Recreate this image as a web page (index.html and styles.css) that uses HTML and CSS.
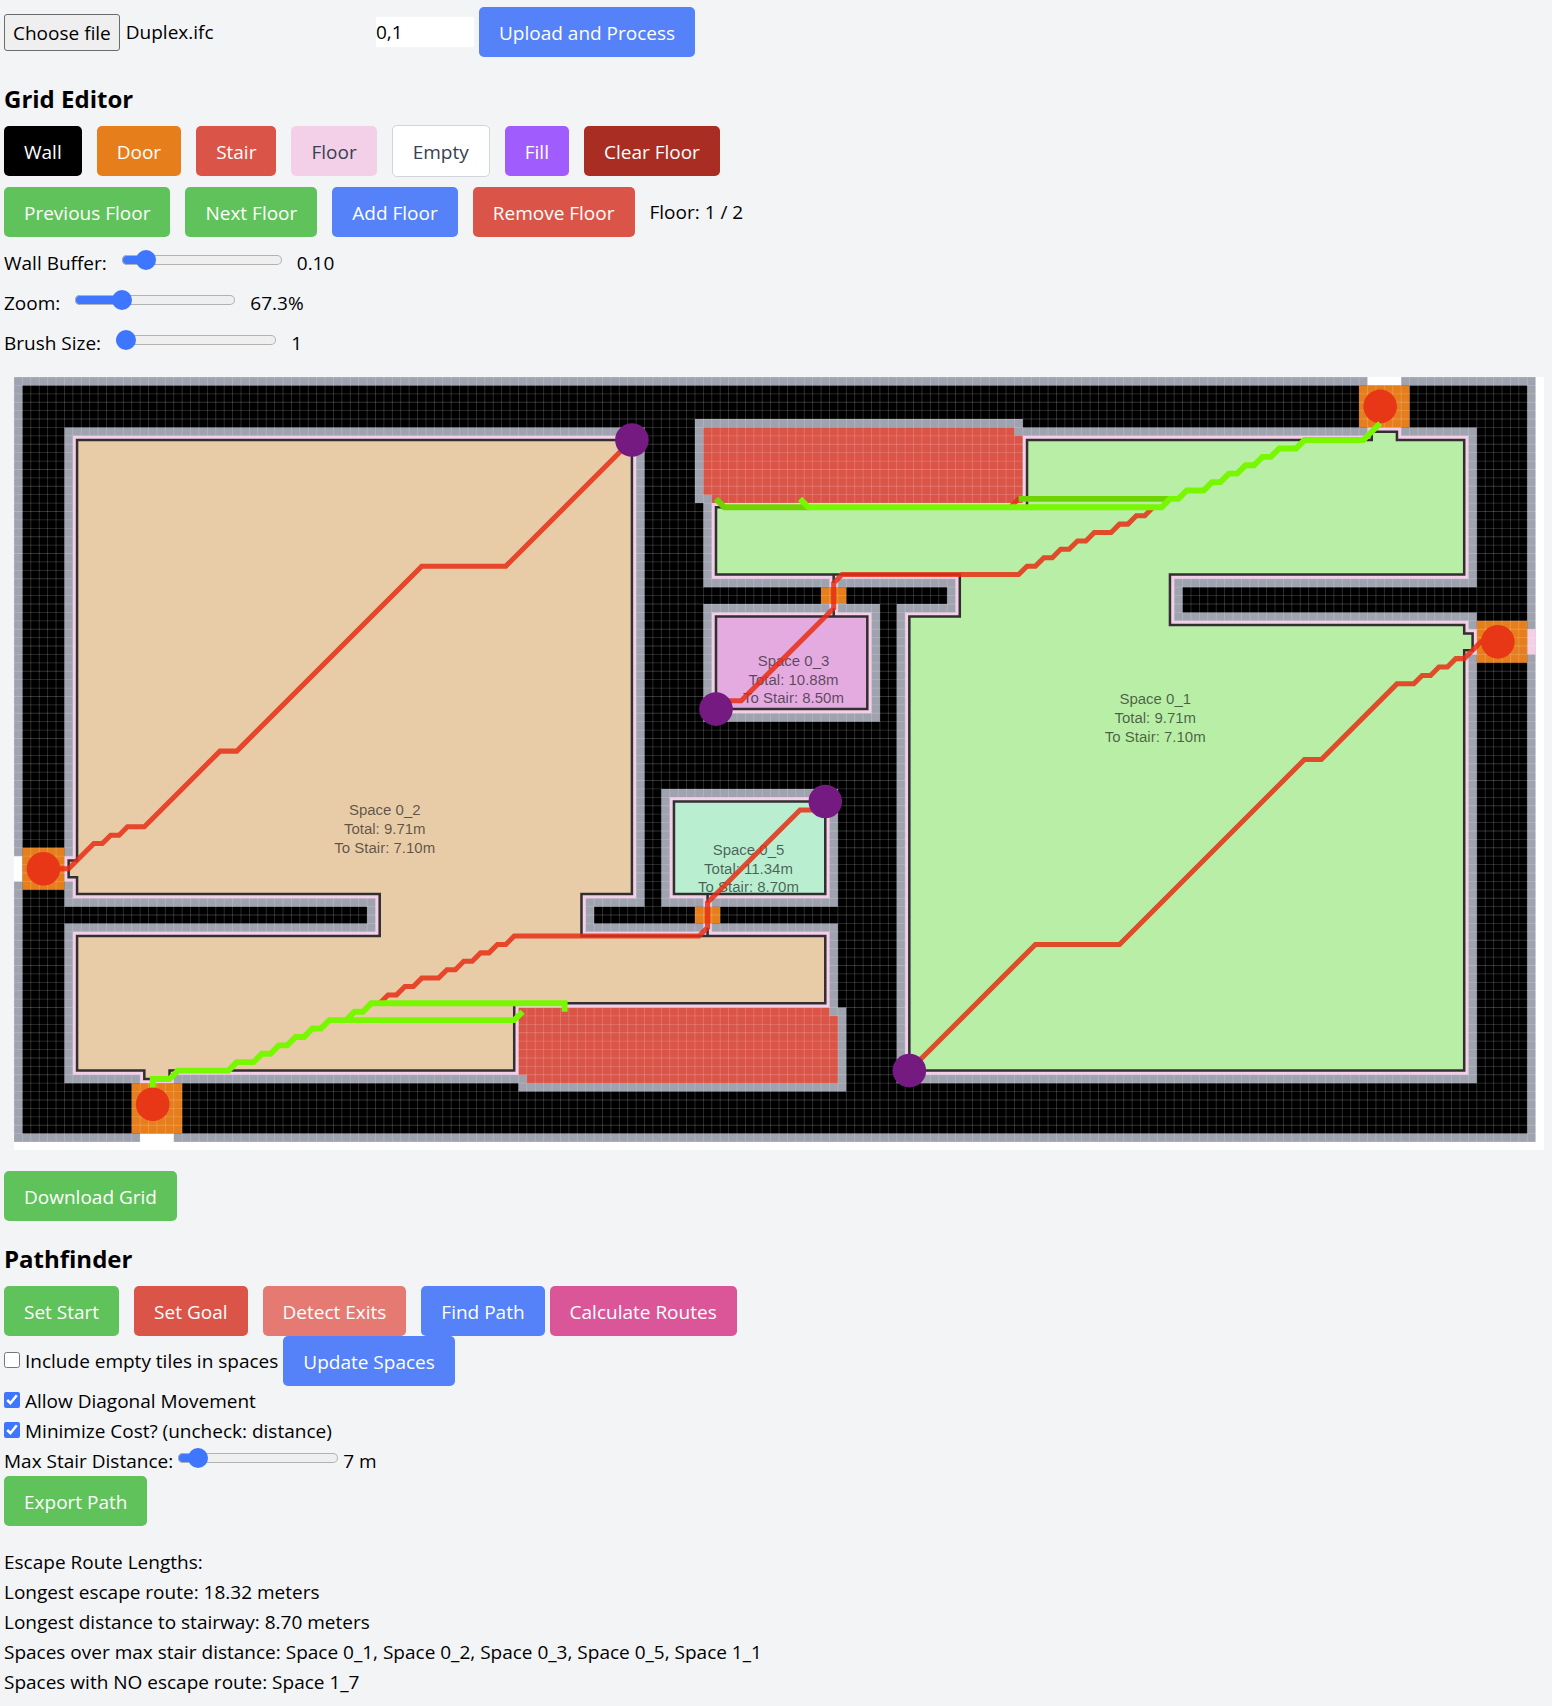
FILE: index.html
```html
<!DOCTYPE html>
<html lang="en">
<head>
<meta charset="utf-8">
<meta name="viewport" content="width=device-width, initial-scale=1">
<title>Grid Editor</title>
<link rel="stylesheet" href="styles.css">
</head>
<body>
<main class="page">
  <form class="upload">
    <div class="file">
      <input class="file-input" type="file" id="ifc-file">
      <label class="file-button" for="ifc-file">Choose file</label>
      <span class="file-name">Duplex.ifc</span>
    </div>
    <input class="floors" type="text" value="0,1" aria-label="Floors">
    <button class="btn blue" type="button">Upload and Process</button>
  </form>

  <section class="editor">
    <h2 class="title">Grid Editor</h2>
    <div class="row tools">
      <button class="btn wall" type="button">Wall</button>
      <button class="btn door" type="button">Door</button>
      <button class="btn red" type="button">Stair</button>
      <button class="btn floor" type="button">Floor</button>
      <button class="btn empty" type="button">Empty</button>
      <button class="btn fill" type="button">Fill</button>
      <button class="btn clear" type="button">Clear Floor</button>
    </div>
    <div class="row levels">
      <button class="btn green" type="button">Previous Floor</button>
      <button class="btn green" type="button">Next Floor</button>
      <button class="btn blue" type="button">Add Floor</button>
      <button class="btn red" type="button">Remove Floor</button>
      <span>Floor: 1 / 2</span>
    </div>
    <div class="sliders">
      <div class="row">
        <label for="buffer">Wall Buffer:</label>
        <input class="range" type="range" id="buffer" min="0" max="100" value="10" style="--fill:14%">
        <output for="buffer">0.10</output>
      </div>
      <div class="row">
        <label for="zoom">Zoom:</label>
        <input class="range" type="range" id="zoom" min="0" max="100" value="26" style="--fill:29%">
        <output for="zoom">67.3%</output>
      </div>
      <div class="row">
        <label for="brush">Brush Size:</label>
        <input class="range" type="range" id="brush" min="1" max="10" value="1" style="--fill:6%">
        <output for="brush">1</output>
      </div>
    </div>

    <div class="plan">
      <svg class="grid" viewBox="0 0 1531 774" role="img" aria-label="Floor plan with escape routes">
        <rect width="1531" height="774" fill="#fff"/>
        <!-- Everything in these groups is measured in grid cells -->
        <g transform="scale(8.4125)">
          <path class="buffer" d="M0 0H181V91H0Z"/>
          <path d="M1 1H180V90H1Z"/>
          <path fill="#fff" d="M161 0H165V1H161ZM0 57H1V60H0ZM15 90H19V91H15Z"/>
          <path class="tile" d="M180 30H181V33H180Z"/>
          <path class="buffer" d="M6 6H75V63H69V65H98V75H99V85H60V84H6V65H42V63H6ZM77 49H98V63H77ZM82 27H103V41H82ZM81 5H120V6H174V25H139V28H174V84H105V27H111V25H82V15H81Z"/>
          <path class="stair" d="M60 75H97V76H98V84H61V83H60ZM82 6H119V7H120V15H83V14H82Z"/>
          <path class="exit" d="M160 1H166V6H160ZM174 29H180V34H174ZM1 56H6V61H1ZM14 84H20V90H14ZM81 63H84V65H81ZM96 25H99V27H96Z"/>
          <path class="lines" d="M0 46H182" stroke-width="92"/>
          <path class="lines" d="M91 0V92" stroke-width="182"/>
          <path class="tile" d="M7 7H74V62H68V66H82V65H83V66H97V75H60V83H19V84H15V83H7V66H43V62H7V60H6V57H7ZM78 50H97V62H83V63H82V62H78ZM83 28H97V27H98V28H102V40H83ZM120 7H161V6H165V7H173V24H138V29H173V30H174V33H173V83H106V28H112V24H98V25H97V24H83V15H120Z"/>
          <g class="spaces">
            <path fill="#e8cca8" d="M7.5 7.5H73.5V61.5H67.5V66.5H96.5V74.5H59.5V82.5H18.5V83.5H15.5V82.5H7.5V66.5H43.5V61.5H7.5V59.5H6.5V57.5H7.5ZM82.5 66.5V65.5"/>
            <path fill="#b9eea7" d="M120.5 7.5H161.5V6.5H164.5V7.5H172.5V23.5H137.5V29.5H172.5V30.5H173.5V32.5H172.5V82.5H106.5V28.5H112.5V23.5H83.5V15.5H120.5ZM97.5 23.5V24.5"/>
            <path fill="#e4abe0" d="M83.5 28.5H101.5V39.5H83.5ZM97.5 28.5V27.5"/>
            <path fill="#b9eed1" d="M78.5 50.5H96.5V61.5H78.5ZM82.5 61.5V62.5"/>
          </g>
        </g>
        <g class="names">
          <text x="371" y="438">Space 0_2</text><text x="371" y="457">Total: 9.71m</text><text x="371" y="476">To Stair: 7.10m</text>
          <text x="1142" y="327">Space 0_1</text><text x="1142" y="346">Total: 9.71m</text><text x="1142" y="365">To Stair: 7.10m</text>
          <text x="780" y="289">Space 0_3</text><text x="780" y="308">Total: 10.88m</text><text x="780" y="326">To Stair: 8.50m</text>
          <text x="735" y="478">Space 0_5</text><text x="735" y="497">Total: 11.34m</text><text x="735" y="515">To Stair: 8.70m</text>
        </g>
        <g transform="scale(8.4125)">
          <g class="route">
            <path d="M73.5 7.5L58.5 22.5H48.5L26.5 44.5H24.5L15.5 53.5H13.5L12.5 54.5H11.5L10.5 55.5H9.5L6.5 58.5H3.5"/>
            <path d="M106.5 82.5L121.5 67.5H131.5L153.5 45.5H155.5L164.5 36.5H166.5L167.5 35.5H168.5L169.5 34.5H170.5L171.5 33.5H172.5L174.5 31.5H176.5"/>
            <path d="M83.5 39.5L84.5 38.5H86.5L97.5 27.5V24.5L98.5 23.5H119.5L120.5 22.5H121.5L122.5 21.5H123.5L124.5 20.5H125.5L126.5 19.5H127.5L128.5 18.5H130.5L131.5 17.5H132.5L133.5 16.5H134.5L135.5 15.5"/>
            <path d="M96.5 50.5L95.5 51.5H93.5L82.5 62.5V65.5L81.5 66.5H59.5L58.5 67.5H57.5L56.5 68.5H55.5L54.5 69.5H53.5L52.5 70.5H51.5L50.5 71.5H48.5L47.5 72.5H46.5L45.5 73.5H44.5L43.5 74.5"/>
            <path d="M118.5 15.5L119.5 14.5H120"/>
          </g>
          <g fill="#e73716"><circle cx="162.5" cy="3.5" r="2"/><circle cx="176.5" cy="31.5" r="2"/><circle cx="3.5" cy="58.5" r="2"/><circle cx="16.5" cy="86.5" r="2"/></g>
          <path class="shared" stroke="#6fd300" d="M119.5 14.5H137.5M83.5 14.5L84.5 15.5H94.5"/>
          <path class="shared" stroke="#78f800" d="M93.5 14.5L94.5 15.5H136.5L137.5 14.5H138.5L139.5 13.5H141.5L142.5 12.5H143.5L144.5 11.5H145.5L146.5 10.5H147.5L148.5 9.5H149.5L150.5 8.5H152.5L153.5 7.5H160.5L162.5 5.5"/>
          <path class="shared" stroke="#78f800" d="M65.5 75.5V74.5H42.5L41.5 75.5H40.5L39.5 76.5M60.5 75.5L59.5 76.5H37.5L36.5 77.5H35.5L34.5 78.5H33.5L32.5 79.5H31.5L30.5 80.5H29.5L28.5 81.5H26.5L25.5 82.5H19.5L18.5 83.5H16.5V84.5"/>
          <g fill="#751a80"><circle cx="73.5" cy="7.5" r="2"/><circle cx="83.5" cy="39.5" r="2"/><circle cx="96.5" cy="50.5" r="2"/><circle cx="106.5" cy="82.5" r="2"/></g>
        </g>
      </svg>
    </div>
    <button class="btn green" type="button">Download Grid</button>
  </section>

  <section class="pathfinder">
    <h2 class="title">Pathfinder</h2>
    <div class="row">
      <button class="btn green" type="button">Set Start</button>
      <button class="btn red" type="button">Set Goal</button>
      <button class="btn salmon" type="button">Detect Exits</button>
      <div class="pair">
        <button class="btn blue" type="button">Find Path</button>
        <button class="btn pink" type="button">Calculate Routes</button>
      </div>
    </div>
    <div class="pair">
      <input class="check" type="checkbox" id="empty-tiles">
      <label for="empty-tiles">Include empty tiles in spaces</label>
      <button class="btn blue" type="button">Update Spaces</button>
    </div>
    <div class="pair">
      <input class="check" type="checkbox" id="diagonal" checked>
      <label for="diagonal">Allow Diagonal Movement</label>
    </div>
    <div class="pair">
      <input class="check" type="checkbox" id="cost" checked>
      <label for="cost">Minimize Cost? (uncheck: distance)</label>
    </div>
    <div class="pair">
      <label for="distance">Max Stair Distance:</label>
      <input class="range" type="range" id="distance" min="0" max="100" value="7" style="--fill:12%">
      <output for="distance">7 m</output>
    </div>
    <button class="btn green" type="button">Export Path</button>
  </section>

  <section class="results">
    <p>Escape Route Lengths:</p>
    <p>Longest escape route: 18.32 meters</p>
    <p>Longest distance to stairway: 8.70 meters</p>
    <p>Spaces over max stair distance: Space 0_1, Space 0_2, Space 0_3, Space 0_5, Space 1_1</p>
    <p>Spaces with NO escape route: Space 1_7</p>
  </section>
</main>
</body>
</html>
```
FILE: styles.css
```css
* { box-sizing: border-box; }

body {
  margin: 0;
  background: #f3f4f6;
  color: #000;
  font: 19px/30px "Open Sans", "Noto Sans", sans-serif;
}

button, input { font: inherit; color: inherit; }
p { margin: 0; }

.page { padding: 7px 4px 8px; }

.upload, .pair { display: flex; align-items: center; gap: 5px; }
.file { position: relative; display: flex; align-items: center; gap: 6px; width: 367px; }
.file-input { position: absolute; width: 1px; height: 1px; opacity: 0; }
.file-button {
  padding: 3px 8px 2px;
  border: 1px solid #6b6b6b;
  border-radius: 3px;
  background: #efefef;
}
.floors { width: 98px; height: 30px; padding: 0; border: 0; background: #fff; }

.title { margin: 0; font-size: 24px; line-height: 34px; font-weight: 700; }
.editor { padding-top: 25px; }
.row { display: flex; align-items: center; gap: 15px; }
.tools { height: 50px; margin-top: 10px; }
.levels { margin-top: 11px; }
.sliders { display: grid; gap: 10px; margin-top: 11px; }

.btn {
  padding: 11px 20px 9px;
  border: 0;
  border-radius: 5px;
  color: #fff;
  white-space: nowrap;
}
.blue { background: #5582f8; }
.green { background: #60c25a; }
.red { background: #db5448; }
.salmon { background: #e57a73; }
.pink { background: #da5699; }
.wall { background: #000; }
.door { background: #e67e1c; }
.floor { background: #f3d0e8; color: #374151; }
.empty { border: 1px solid #d1d5db; background: #fff; color: #374151; }
.fill { background: #a05cfd; }
.clear { background: #a92d23; }

.range {
  appearance: none;
  width: 160px;
  height: 10px;
  margin: 0 0 6px;
  border-radius: 5px;
  background: linear-gradient(to right, #3f76ff var(--fill), #efefef var(--fill));
  box-shadow: inset 0 0 0 1px #b2b2b2;
}
.range::-webkit-slider-thumb {
  appearance: none;
  width: 20px;
  height: 20px;
  border-radius: 50%;
  background: #3f76ff;
}
.check { width: 16px; height: 16px; margin: 0 0 3px; accent-color: #3f76ff; }

.plan { padding: 19px 4px 21px 10px; }
.grid { display: block; width: 100%; height: auto; }
.buffer { fill: #9fa3af; }
.tile { fill: #f3d0e8; }
.stair { fill: #db5448; }
.exit { fill: #e67e1c; }
.lines { fill: none; stroke: #fff; stroke-opacity: .2; stroke-dasharray: .1 .9; stroke-dashoffset: .05; }
.spaces { stroke: #332e30; stroke-width: .3; }
.names { font: 15px "Liberation Sans", Arial, sans-serif; text-anchor: middle; fill: #000; fill-opacity: .6; }
.route { fill: none; stroke: #e62e14; stroke-opacity: .85; stroke-width: .6; }
.shared { fill: none; stroke-width: .7; }

.pathfinder { padding-top: 21px; }
.pathfinder .title { margin-bottom: 10px; }
.results { padding-top: 21px; }
```
